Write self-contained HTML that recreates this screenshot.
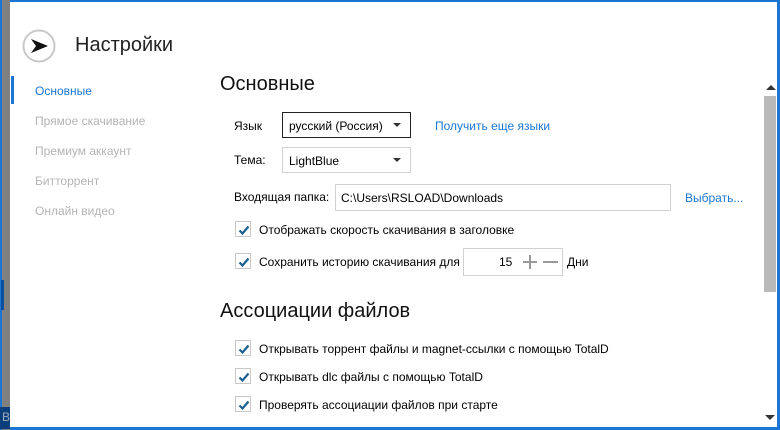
<!DOCTYPE html>
<html><head><meta charset="utf-8"><style>
*{margin:0;padding:0;box-sizing:border-box}
body{width:780px;height:430px;overflow:hidden;background:#fff;font-family:"Liberation Sans",sans-serif;color:#000;position:relative;font-size:12px}
.a{position:absolute;white-space:nowrap}
.nav{color:#b4b4b4;font-size:12px}
.cb{position:absolute;width:16px;height:16px;border:1px solid #c8c8c8;background:#fff}
.cb svg{position:absolute;left:1px;top:1px}
.box{position:absolute;border:1px solid #d0d0d0;background:#fff}
.tri{position:absolute;width:0;height:0;border-left:4px solid transparent;border-right:4px solid transparent;border-top:4px solid #333}
</style></head><body>
<div class="a" style="left:0;top:0;width:10px;height:430px;background:#808080"></div>
<div class="a" style="left:0;top:0;width:2px;height:430px;background:#1a76d2"></div>
<div class="a" style="left:1px;top:280px;width:3px;height:30px;background:#0b4f9c"></div>
<div class="a" style="left:0;top:407px;width:10px;height:22px;background:#0c3f7a"></div>
<div class="a" style="left:2px;top:410px;color:#9ab;font-size:12px">B</div>
<div class="a" style="left:10px;top:0;width:770px;height:2px;background:#1a76d2"></div>
<div class="a" style="left:777px;top:0;width:3px;height:430px;background:#1a76d2"></div>
<div class="a" style="left:10px;top:427px;width:770px;height:3px;background:#1a76d2"></div>

<svg class="a" style="left:22px;top:29px" width="34" height="34" viewBox="0 0 34 34"><circle cx="17" cy="17" r="15.5" fill="#fff" stroke="#c8c8c8" stroke-width="2"/><path d="M9 10 L26 17 L9 24 L14 17 Z" fill="#111"/></svg>
<div class="a" style="left:75px;top:34px;font-size:20px;color:#222">Настройки</div>

<div class="a" style="left:11px;top:76px;width:3px;height:28px;background:#1a76d2"></div>
<div class="a" style="left:35px;top:84px;color:#1a76d2">Основные</div>
<div class="a nav" style="left:35px;top:114px">Прямое скачивание</div>
<div class="a nav" style="left:35px;top:144px">Премиум аккаунт</div>
<div class="a nav" style="left:35px;top:174px">Битторрент</div>
<div class="a nav" style="left:35px;top:204px">Онлайн видео</div>

<div class="a" style="left:220px;top:73px;font-size:20px;color:#111">Основные</div>
<div class="a" style="left:234px;top:119px">Язык</div>
<div class="box" style="left:282px;top:112px;width:129px;height:26px;border-color:#222"></div>
<div class="a" style="left:289px;top:119px">русский (Россия)</div>
<div class="tri" style="left:393px;top:123px"></div>
<div class="a" style="left:435px;top:119px;color:#1a76d2">Получить еще языки</div>
<div class="a" style="left:234px;top:153px">Тема:</div>
<div class="box" style="left:282px;top:147px;width:129px;height:26px"></div>
<div class="a" style="left:289px;top:154px">LightBlue</div>
<div class="tri" style="left:393px;top:158px"></div>
<div class="a" style="left:234px;top:190px">Входящая папка:</div>
<div class="box" style="left:335px;top:184px;width:336px;height:27px"></div>
<div class="a" style="left:341px;top:191px">C:\Users\RSLOAD\Downloads</div>
<div class="a" style="left:685px;top:191px;color:#1a76d2">Выбрать...</div>

<div class="cb" style="left:235px;top:221px"><svg width="14" height="14"><path d="M2.5 7.5 L5.5 10.5 L11.5 3.5" stroke="#1b5f93" stroke-width="2.2" fill="none"/></svg></div>
<div class="a" style="left:259px;top:223px">Отображать скорость скачивания в заголовке</div>
<div class="cb" style="left:235px;top:253px"><svg width="14" height="14"><path d="M2.5 7.5 L5.5 10.5 L11.5 3.5" stroke="#1b5f93" stroke-width="2.2" fill="none"/></svg></div>
<div class="a" style="left:259px;top:255px">Сохранить историю скачивания для</div>
<div class="box" style="left:463px;top:248px;width:100px;height:28px"></div>
<div class="a" style="left:499px;top:255px">15</div>
<div class="a" style="left:523px;top:261px;width:14px;height:2px;background:#999"></div>
<div class="a" style="left:529px;top:255px;width:2px;height:14px;background:#999"></div>
<div class="a" style="left:543px;top:261px;width:15px;height:2px;background:#999"></div>
<div class="a" style="left:567px;top:255px">Дни</div>

<div class="a" style="left:220px;top:300px;font-size:20px;color:#111">Ассоциации файлов</div>
<div class="cb" style="left:235px;top:340px"><svg width="14" height="14"><path d="M2.5 7.5 L5.5 10.5 L11.5 3.5" stroke="#1b5f93" stroke-width="2.2" fill="none"/></svg></div>
<div class="a" style="left:259px;top:342px">Открывать торрент файлы и magnet-ссылки с помощью TotalD</div>
<div class="cb" style="left:235px;top:368px"><svg width="14" height="14"><path d="M2.5 7.5 L5.5 10.5 L11.5 3.5" stroke="#1b5f93" stroke-width="2.2" fill="none"/></svg></div>
<div class="a" style="left:259px;top:370px">Открывать dlc файлы с помощью TotalD</div>
<div class="cb" style="left:235px;top:396px"><svg width="14" height="14"><path d="M2.5 7.5 L5.5 10.5 L11.5 3.5" stroke="#1b5f93" stroke-width="2.2" fill="none"/></svg></div>
<div class="a" style="left:259px;top:398px">Проверять ассоциации файлов при старте</div>

<div class="a" style="left:766px;top:85px;width:0;height:0;border-left:5px solid transparent;border-right:5px solid transparent;border-bottom:5px solid #333"></div>
<div class="a" style="left:764px;top:96px;width:12px;height:196px;background:#b9b9b9"></div>
<div class="a" style="left:765px;top:415px;width:0;height:0;border-left:5px solid transparent;border-right:5px solid transparent;border-top:5px solid #333"></div>
</body></html>
